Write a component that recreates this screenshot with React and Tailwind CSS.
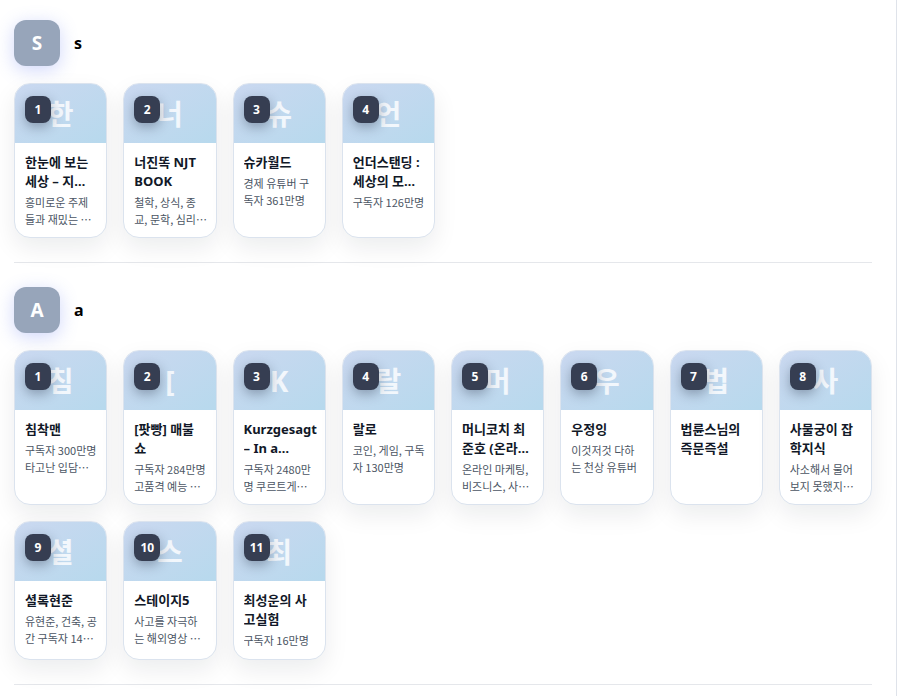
import React from "react";

const sections = [
  {
    key: "S",
    label: "s",
    channels: [
      { name: "한눈에 보는 세상 – 지식 채널", desc: "흥미로운 주제들과 재밌는 이야기" },
      { name: "너진똑 NJT BOOK", desc: "철학, 상식, 종교, 문학, 심리학 등" },
      { name: "슈카월드", desc: "경제 유튜버 구독자 361만명" },
      { name: "언더스탠딩 : 세상의 모든 지식", desc: "구독자 126만명" },
    ],
  },
  {
    key: "A",
    label: "a",
    channels: [
      { name: "침착맨", desc: "구독자 300만명 타고난 입담과 예능감" },
      { name: "[팟빵] 매불쇼", desc: "구독자 284만명 고품격 예능 시사 토크쇼" },
      { name: "Kurzgesagt – In a Nutshell", desc: "구독자 2480만명 쿠르트게작트 과학 애니메이션" },
      { name: "랄로", desc: "코인, 게임, 구독자 130만명" },
      { name: "머니코치 최준호 (온라인 마케팅)", desc: "온라인 마케팅, 비즈니스, 사업 노하우" },
      { name: "우정잉", desc: "이것저것 다하는 천상 유튜버" },
      { name: "법륜스님의 즉문즉설", desc: "" },
      { name: "사물궁이 잡학지식", desc: "사소해서 물어보지 못했지만 궁금했던 이야기" },
      { name: "셜록현준", desc: "유현준, 건축, 공간 구독자 143만명" },
      { name: "스테이지5", desc: "사고를 자극하는 해외영상 번역" },
      { name: "최성운의 사고실험", desc: "구독자 16만명" },
    ],
  },
];

const font = { fontFamily: '"Noto Sans", "Noto Sans CJK KR", sans-serif' };
const cjkFirst = { fontFamily: '"Noto Sans CJK KR", "Noto Sans", sans-serif' };

function ChannelCard({ index, channel }) {
  const letter = channel.name.charAt(0);
  return (
    <div className="flex flex-col overflow-hidden rounded-2xl border border-[#dbe3ee] bg-white shadow-[0_10px_24px_rgba(15,23,42,0.08)]">
      <div className="relative flex h-[59px] items-center justify-center bg-gradient-to-br from-[#cad8f0] to-[#b7d9ed]">
        <span className="text-[28px] font-bold leading-none text-white/80">{letter}</span>
        <span className="absolute left-[10px] top-[12px] flex h-[27px] w-[26px] items-center justify-center rounded-lg bg-[#363e52] text-[12px] font-bold text-white shadow-[0_4px_12px_rgba(30,41,59,0.35)]">
          {index}
        </span>
      </div>
      <div className="flex flex-col pl-[10px] pr-2 pt-[10px] pb-[10px]">
        <div className="line-clamp-2 pr-[2px] text-[13px] font-bold leading-[19px] text-[#111827]">
          {channel.name}
        </div>
        {channel.desc && (
          <div className="mt-[3px] line-clamp-2 text-[11px] leading-[16.5px] text-[#4b5563]" style={cjkFirst}>
            {channel.desc}
          </div>
        )}
      </div>
    </div>
  );
}

function Section({ section }) {
  return (
    <section className="border-b border-[#e5e7eb] pb-6 pt-6 first:pt-5">
      <div className="flex items-center gap-[14px]">
        <div className="flex h-[46px] w-[46px] items-center justify-center rounded-xl bg-[#97a5ba] text-[19px] font-bold text-white shadow-[0_4px_18px_rgba(99,122,241,0.3)]">
          {section.key}
        </div>
        <span className="text-[16px] font-bold text-black">{section.label}</span>
      </div>
      <div className="mt-[17px] grid grid-cols-8 gap-4">
        {section.channels.map((c, i) => (
          <ChannelCard key={i} index={i + 1} channel={c} />
        ))}
      </div>
    </section>
  );
}

export default function App() {
  return (
    <div className="min-h-screen bg-white" style={font}>
      <div className="mr-[1px] min-h-screen border-r border-[#dfe3ea] pl-[14px] pr-6">
        {sections.map((s) => (
          <Section key={s.key} section={s} />
        ))}
      </div>
    </div>
  );
}
